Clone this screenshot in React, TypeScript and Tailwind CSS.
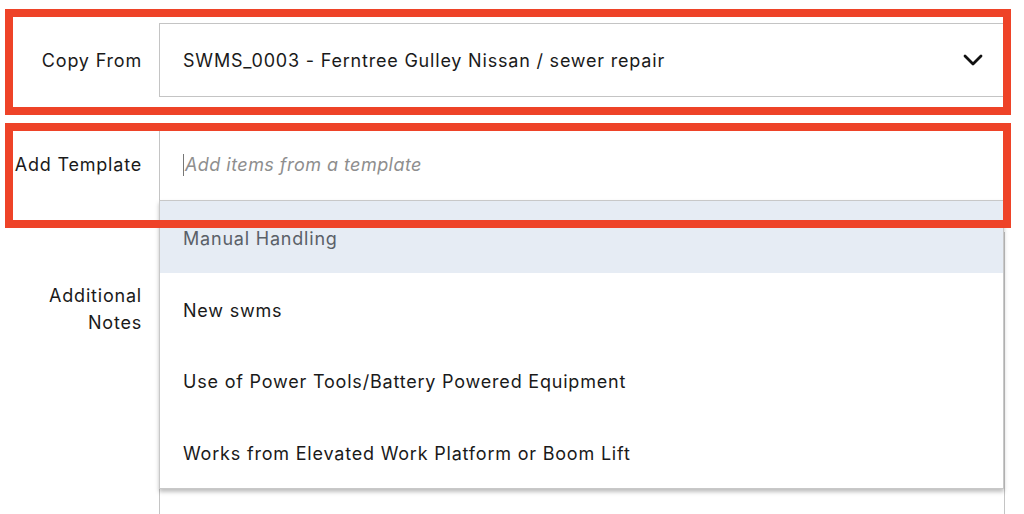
import React from "react";

const items = [
  "Manual Handling",
  "New swms",
  "Use of Power Tools/Battery Powered Equipment",
  "Works from Elevated Work Platform or Boom Lift",
];

export default function App() {
  return (
    <div
      className="relative w-[1024px] h-[514px] overflow-hidden bg-white text-[#1a1a1a] tracking-[0.8px]"
      style={{ fontFamily: "Inter, 'Noto Sans', sans-serif" }}
    >
      <div className="flex flex-col pt-[23px] gap-[31px]">
        {/* Copy From */}
        <div className="flex items-center h-[74px]">
          <div className="w-[159px] pr-[17px] text-right text-[18px]">Copy From</div>
          <div className="flex-none w-[846px] h-[74px] border border-[#c4c4c4] flex items-center pl-[23px] pr-[20px]">
            <span className="flex-1 text-[18px]">SWMS_0003 - Ferntree Gulley Nissan / sewer repair</span>
            <svg width="20" height="12" viewBox="0 0 20 12" className="mr-[1px]">
              <path d="M2 2 L10 10 L18 2" fill="none" stroke="#111" strokeWidth="2.8" strokeLinecap="round" strokeLinejoin="round" />
            </svg>
          </div>
        </div>

        {/* Add Template */}
        <div className="relative flex items-center h-[73px]">
          <div className="w-[159px] pr-[17px] text-right text-[18px]">Add Template</div>
          <div className="flex-none w-[846px] h-[73px] border border-[#c4c4c4] flex items-center pl-[23px]">
            <span className="w-px h-[22px] bg-[#777] mr-[1px]" />
            <span className="italic text-[18px] text-[#8e8e8e] tracking-[0.45px]">Add items from a template</span>
          </div>
          {/* dropdown */}
          <div className="absolute left-[159px] top-[72px] w-[845px] z-10 bg-white border border-[#c8c8c8] shadow-[0_3px_4px_rgba(0,0,0,0.25)]">
            {items.map((t, i) => (
              <div
                key={t}
                className={
                  "h-[71.75px] flex items-center pl-[23px] pt-[3px] text-[18px] " +
                  (i === 0 ? "bg-[#e6ecf4] text-[#5a6068]" : "text-[#1a1a1a]")
                }
              >
                {t}
              </div>
            ))}
          </div>
        </div>

        {/* Additional Notes */}
        <div className="flex items-start">
          <div className="w-[159px] pr-[17px] pt-[50px] text-right text-[18px] leading-[27px]">
            Additional
            <br />
            Notes
          </div>
          <div className="flex-none w-[846px] h-[300px] border border-[#c4c4c4]" />
        </div>
      </div>

      {/* annotation boxes */}
      <div className="absolute left-[5px] top-[9px] w-[1006px] h-[106px] border-[8px] border-[#ee4328] pointer-events-none z-20" />
      <div className="absolute left-[5px] top-[123px] w-[1006px] h-[105px] border-[8px] border-[#ee4328] pointer-events-none z-20" />
    </div>
  );
}
